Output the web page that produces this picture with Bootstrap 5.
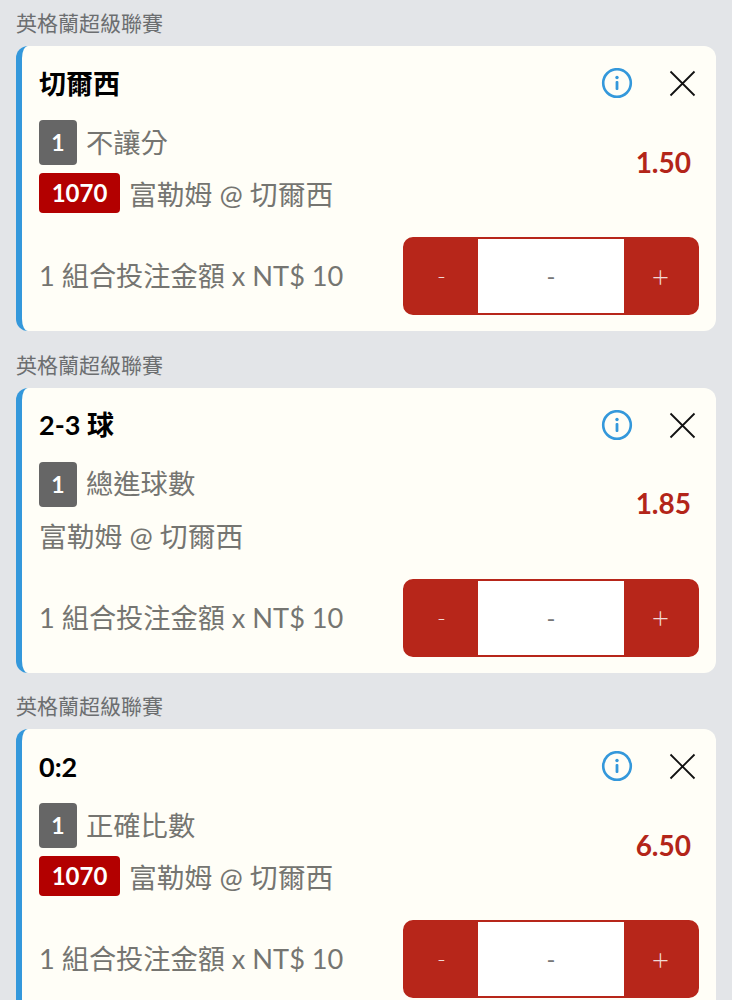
<!DOCTYPE html>
<html lang="zh-Hant">
<head>
  <meta charset="UTF-8" />
  <meta name="viewport" content="width=device-width, initial-scale=1.0" />
  <title>Bet slip</title>
  <link href="https://cdn.jsdelivr.net/npm/bootstrap@5.3.0/dist/css/bootstrap.min.css" rel="stylesheet" />
  <style>
    html, body { height: 100%; overflow: hidden; }
    body {
      background: #e3e5e8;
      font-family: Lato, "Noto Sans CJK TC", sans-serif;
      color: #757571;
    }
    .league-name { height: 46px; line-height: 46px; padding-left: 16px; font-size: 21px; color: #6c6e70; }
    .bet-card {
      margin: 0 16px 10.7px;
      height: 285px;
      padding: 16px 17px;
      background: #fffef7;
      border-left: 6px solid #3498db;
      border-radius: 12px;
    }
    .bet-title { height: 46px; padding-bottom: 2px; font-size: 27px; font-weight: 700; color: #000; }
    .head-icons { gap: 33px; }
    .head-icons svg { display: block; }
    .bet-info { margin-top: 12px; height: 93px; }
    .info-row { font-size: 27.3px; line-height: 40px; }
    .info-row + .info-row { margin-top: 8px; }
    .tag-num, .tag-code { color: #fff; font-weight: 700; border-radius: 4px; text-align: center; }
    .tag-num { width: 38px; height: 45px; line-height: 45px; background: #666; font-size: 23px; margin-right: 9px; }
    .tag-code { width: 81px; height: 40px; line-height: 40px; background: #b30000; font-size: 24px; margin-right: 9px; }
    .match-name { font-size: 27.8px; line-height: 37px; padding-top: 3px; }
    .odds-val { font-size: 28px; font-weight: 700; color: #b32519; margin-right: 8px; margin-bottom: 10px; }
    .stake-row { margin-top: 24px; height: 78px; }
    .stake-label { font-size: 27.2px; padding-top: 1px; }
    .stepper {
      width: 296px; height: 78px;
      background: #b7261a;
      border: 2px solid #b7261a;
      border-radius: 10px;
      overflow: hidden;
    }
    .stepper .btn {
      width: 73px; padding: 0; border: 0; border-radius: 0;
      background: #b7261a; color: #f1d9d6; font-size: 24px; font-weight: 300;
    }
    .stepper .btn-plus { font-size: 30px; }
    .stepper-val { background: #fff; color: #777; font-size: 24px; }
  </style>
</head>
<body>

  <div class="league-name">英格蘭超級聯賽</div>
  <div class="bet-card">
    <div class="bet-title d-flex justify-content-between align-items-center">
      <span>切爾西</span>
      <div class="head-icons d-flex align-items-center">
        <svg width="32" height="32" viewBox="0 0 32 32"><circle cx="16" cy="15" r="13.8" fill="none" stroke="#3498db" stroke-width="2.6"/><circle cx="16" cy="9.5" r="1.7" fill="#3498db"/><rect x="14.6" y="13" width="2.8" height="9" rx="1" fill="#3498db"/></svg>
        <svg width="33" height="32" viewBox="0 0 33 32"><path d="M4.5 3.5 28.5 27.5M28.5 3.5 4.5 27.5" stroke="#111" stroke-width="1.8" fill="none"/></svg>
      </div>
    </div>
    <div class="bet-info d-flex justify-content-between align-items-center">
      <div>
        <div class="info-row d-flex align-items-center"><span class="tag-num">1</span><span>不讓分</span></div>
        <div class="info-row d-flex align-items-center"><span class="tag-code">1070</span><span class="match-name">富勒姆 @ 切爾西</span></div>
      </div>
      <div class="odds-val">1.50</div>
    </div>
    <div class="stake-row d-flex justify-content-between align-items-center">
      <span class="stake-label">1 組合投注金額 x NT$ 10</span>
      <div class="stepper d-flex">
        <button class="btn" type="button">-</button>
        <div class="stepper-val flex-grow-1 d-flex justify-content-center align-items-center">-</div>
        <button class="btn btn-plus" type="button">+</button>
      </div>
    </div>
  </div>

  <div class="league-name">英格蘭超級聯賽</div>
  <div class="bet-card">
    <div class="bet-title d-flex justify-content-between align-items-center">
      <span>2-3 球</span>
      <div class="head-icons d-flex align-items-center">
        <svg width="32" height="32" viewBox="0 0 32 32"><circle cx="16" cy="15" r="13.8" fill="none" stroke="#3498db" stroke-width="2.6"/><circle cx="16" cy="9.5" r="1.7" fill="#3498db"/><rect x="14.6" y="13" width="2.8" height="9" rx="1" fill="#3498db"/></svg>
        <svg width="33" height="32" viewBox="0 0 33 32"><path d="M4.5 3.5 28.5 27.5M28.5 3.5 4.5 27.5" stroke="#111" stroke-width="1.8" fill="none"/></svg>
      </div>
    </div>
    <div class="bet-info d-flex justify-content-between align-items-center">
      <div>
        <div class="info-row d-flex align-items-center"><span class="tag-num">1</span><span>總進球數</span></div>
        <div class="info-row d-flex align-items-center"><span class="match-name">富勒姆 @ 切爾西</span></div>
      </div>
      <div class="odds-val">1.85</div>
    </div>
    <div class="stake-row d-flex justify-content-between align-items-center">
      <span class="stake-label">1 組合投注金額 x NT$ 10</span>
      <div class="stepper d-flex">
        <button class="btn" type="button">-</button>
        <div class="stepper-val flex-grow-1 d-flex justify-content-center align-items-center">-</div>
        <button class="btn btn-plus" type="button">+</button>
      </div>
    </div>
  </div>

  <div class="league-name">英格蘭超級聯賽</div>
  <div class="bet-card">
    <div class="bet-title d-flex justify-content-between align-items-center">
      <span>0:2</span>
      <div class="head-icons d-flex align-items-center">
        <svg width="32" height="32" viewBox="0 0 32 32"><circle cx="16" cy="15" r="13.8" fill="none" stroke="#3498db" stroke-width="2.6"/><circle cx="16" cy="9.5" r="1.7" fill="#3498db"/><rect x="14.6" y="13" width="2.8" height="9" rx="1" fill="#3498db"/></svg>
        <svg width="33" height="32" viewBox="0 0 33 32"><path d="M4.5 3.5 28.5 27.5M28.5 3.5 4.5 27.5" stroke="#111" stroke-width="1.8" fill="none"/></svg>
      </div>
    </div>
    <div class="bet-info d-flex justify-content-between align-items-center">
      <div>
        <div class="info-row d-flex align-items-center"><span class="tag-num">1</span><span>正確比數</span></div>
        <div class="info-row d-flex align-items-center"><span class="tag-code">1070</span><span class="match-name">富勒姆 @ 切爾西</span></div>
      </div>
      <div class="odds-val">6.50</div>
    </div>
    <div class="stake-row d-flex justify-content-between align-items-center">
      <span class="stake-label">1 組合投注金額 x NT$ 10</span>
      <div class="stepper d-flex">
        <button class="btn" type="button">-</button>
        <div class="stepper-val flex-grow-1 d-flex justify-content-center align-items-center">-</div>
        <button class="btn btn-plus" type="button">+</button>
      </div>
    </div>
  </div>

  <script src="https://cdn.jsdelivr.net/npm/bootstrap@5.3.0/dist/js/bootstrap.bundle.min.js"></script>
</body>
</html>
